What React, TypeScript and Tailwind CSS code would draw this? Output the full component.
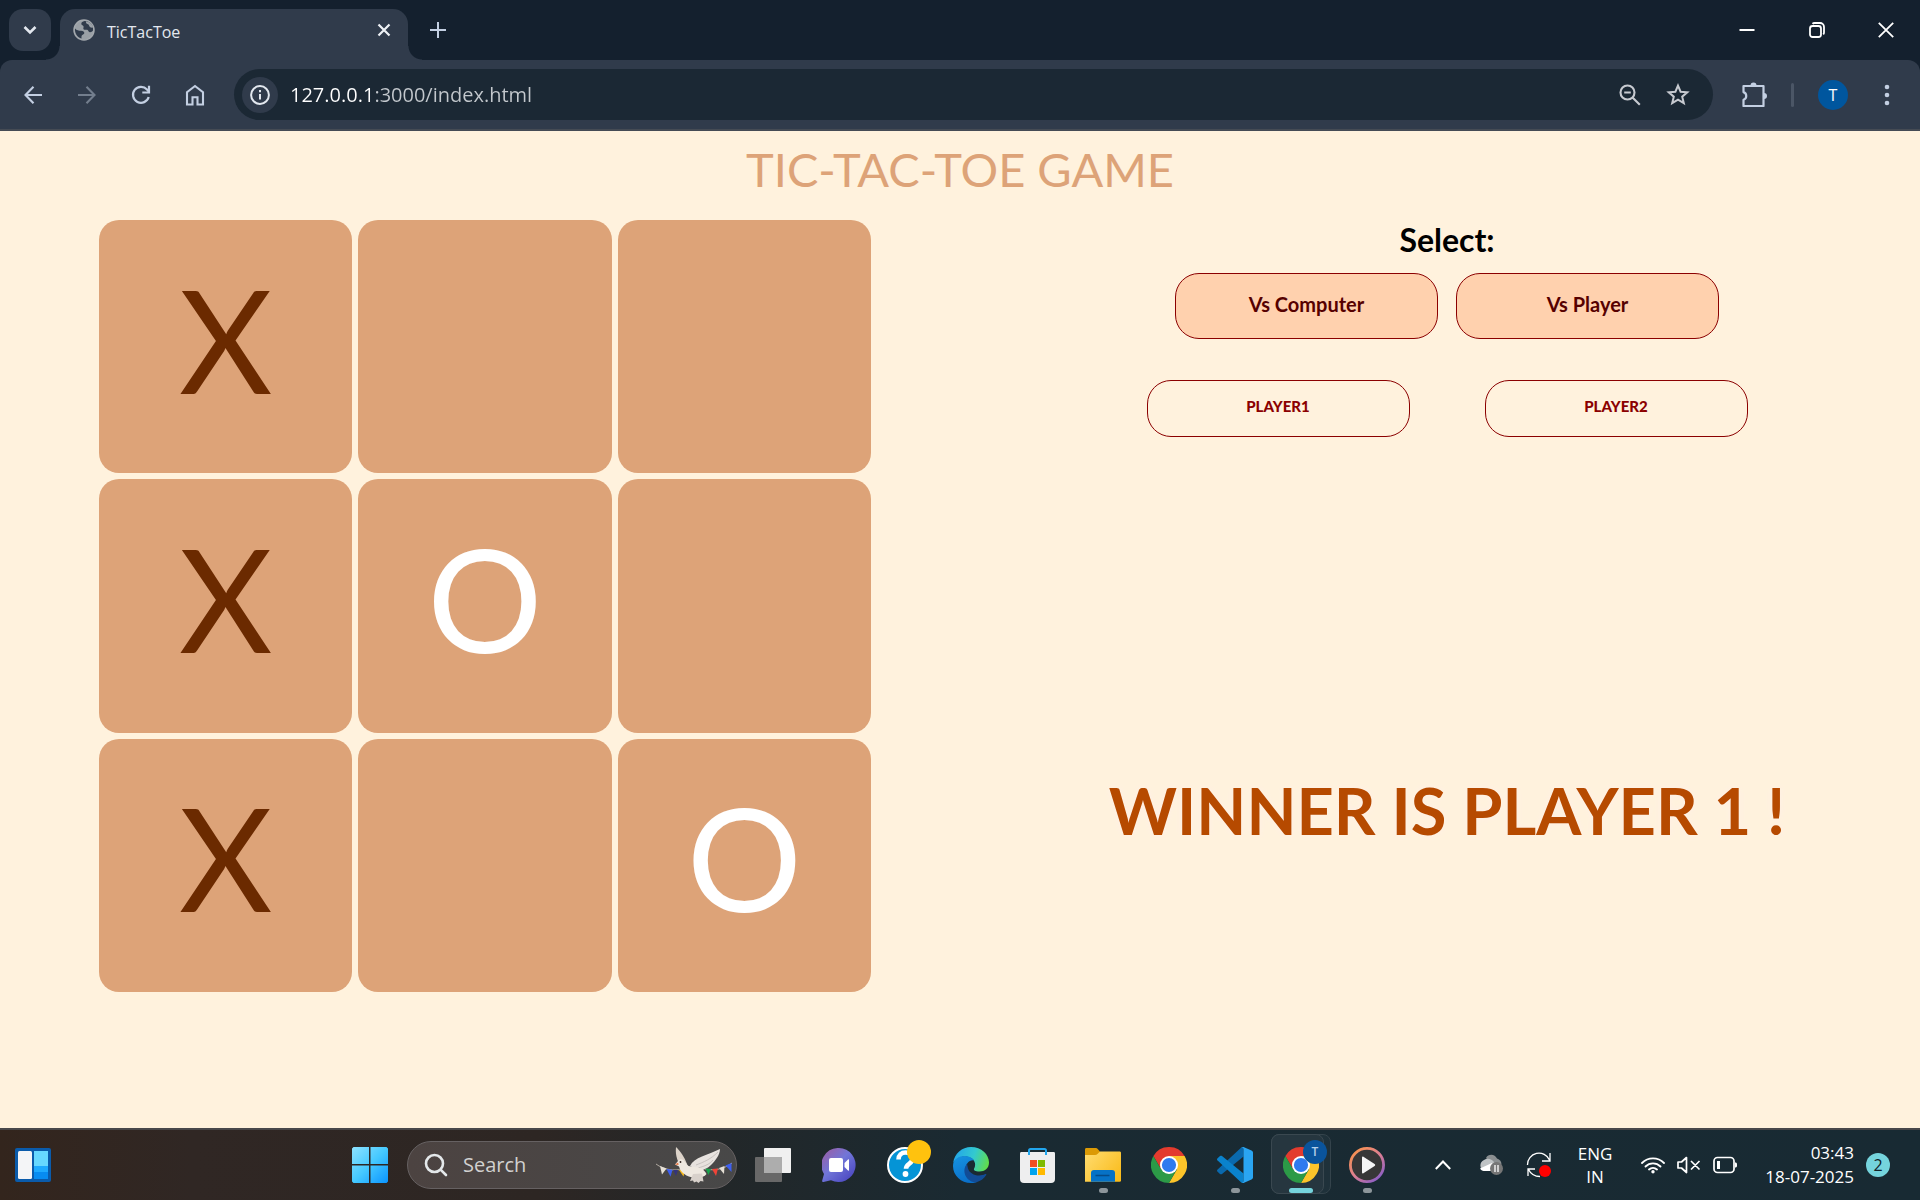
import React from "react";

type Mark = "X" | "O" | "";

const board: Mark[] = ["X", "", "", "X", "O", "", "X", "", "O"];

const iconButton = "flex h-9 items-center justify-center";

function GlobeIcon() {
  return (
    <svg width="22" height="22" viewBox="0 0 22 22" aria-hidden="true">
      <circle cx="11" cy="11" r="10" fill="#9aa0a6" stroke="#a3a8ad" strokeWidth="1.5" />
      <path
        d="M2 9.5c1.8 2 3.6 2.2 6 2.2 2.3 0 3.4.9 3.3 2.4 0 1.300-1.500 1.500-2.300 2.100-.6.5-.5 1.500-.5 3.200C4.500 18.500 1.500 14.500 2 9.500z"
        fill="#303b4b"
      />
      <path
        d="M11.500 2c-1.700.6-3.300 1.200-3.200 2.900.1 1.500 2 1.100 2.300 2.500.2 1.200-.9 2.100.2 3.100 1.100.9 2.200-.2 3.400.3 1.300.6 1 2.200 2.600 2.500 1.300.2 2.300-.6 3.200-1.700C20.700 6 17 2.200 11.500 2z"
        fill="#303b4b"
      />
      <path d="M13 2.200c-.3 1.700.4 2.500 2 3 1.400.5 1 2.200 2.200 3 .9.600 2.200.5 3.200.3C19.300 4.900 16.500 2.700 13 2.200z" fill="#9aa0a6" />
    </svg>
  );
}

function TabStrip() {
  return (
    <div className="flex h-[60px] items-end pl-[9px]">
      <button aria-label="Search tabs" className="mb-[9px] flex size-[42px] items-center justify-center rounded-[14px] bg-[#303b4b]">
        <svg width="14" height="10" viewBox="0 0 14 10" fill="none" stroke="#e3e8ef" strokeWidth="2.600" aria-hidden="true">
          <path d="M1.500 2l5.500 5.500L12.500 2" />
        </svg>
      </button>
      <div className="relative ml-[9px] flex h-[51px] w-[348px] items-center rounded-t-[15px] bg-[#303b4b] pr-3 pb-[9px] pl-[13px] before:absolute before:bottom-0 before:-left-[14px] before:size-[14px] before:bg-[radial-gradient(circle_at_0_0,transparent_13px,#303b4b_14px)] after:absolute after:-right-[14px] after:bottom-0 after:size-[14px] after:bg-[radial-gradient(circle_at_100%_0,transparent_13px,#303b4b_14px)]">
        <GlobeIcon />
        <span className="ml-3 pt-1 text-base leading-5 text-[#e3e8ef]">TicTacToe</span>
        <button aria-label="Close tab" className="ml-auto flex size-6 items-center justify-center">
          <svg width="14" height="14" viewBox="0 0 14 14" fill="none" stroke="#eef1f5" strokeWidth="2.200" aria-hidden="true">
            <path d="M1.500 1.500l11 11M12.500 1.500l-11 11" />
          </svg>
        </button>
      </div>
      <button aria-label="New tab" className="mb-[18px] ml-[18px] flex size-6 items-center justify-center">
        <svg width="16" height="16" viewBox="0 0 16 16" fill="none" stroke="#c3cfe2" strokeWidth="2" aria-hidden="true">
          <path d="M8 0v16M0 8h16" />
        </svg>
      </button>
      <div className="mb-3 ml-auto flex">
        <button aria-label="Minimize" className={`${iconButton} w-[70px]`}>
          <svg width="16" height="16" viewBox="0 0 16 16" stroke="#fff" strokeWidth="2" aria-hidden="true">
            <path d="M.5 8h15" />
          </svg>
        </button>
        <button aria-label="Restore" className={`${iconButton} w-[69px]`}>
          <svg width="16" height="16" viewBox="0 0 16 16" fill="none" stroke="#fff" strokeWidth="1.800" aria-hidden="true">
            <rect x="1" y="4" width="11" height="11" rx="2.500" />
            <path d="M3.500 1.800C4 1.200 4.800 1 5.600 1H11a4 4 0 0 1 4 4v5.400c0 .8-.3 1.500-.8 2" />
          </svg>
        </button>
        <button aria-label="Close window" className={`${iconButton} w-[69px]`}>
          <svg width="16" height="16" viewBox="0 0 16 16" stroke="#fff" strokeWidth="1.800" aria-hidden="true">
            <path d="M.8.800l14.400 14.400M15.200.8L.8 15.200" />
          </svg>
        </button>
      </div>
    </div>
  );
}

function Toolbar() {
  return (
    <div className="flex h-[71px] items-center rounded-t-[12px] border-b-2 border-[#454b54] bg-[#303b4b] pl-[6px] text-[#c3cfe2]">
      <button aria-label="Back" className={`${iconButton} w-[54px]`}>
        <svg width="18" height="18" viewBox="0 0 18 18" fill="none" stroke="currentColor" strokeWidth="2.100" aria-hidden="true">
          <path d="M18 9H1.500M9.500.8L1.500 9l8 8.200" />
        </svg>
      </button>
      <button aria-label="Forward" className={`${iconButton} w-[54px] text-[#737e8d]`}>
        <svg width="18" height="18" viewBox="0 0 18 18" fill="none" stroke="currentColor" strokeWidth="2.100" aria-hidden="true">
          <path d="M0 9h16.500M8.500.8l8 8.200-8 8.200" />
        </svg>
      </button>
      <button aria-label="Reload" className={`${iconButton} w-[54px]`}>
        <svg width="20" height="20" viewBox="0 0 20 20" fill="none" stroke="currentColor" strokeWidth="2.200" aria-hidden="true">
          <path d="M17.700 12A8 8 0 1 1 16 4.500l1.800 2" />
          <path d="M18 .8v6.700h-6.700" />
        </svg>
      </button>
      <button aria-label="Home" className={`${iconButton} w-[54px]`}>
        <svg width="20" height="22" viewBox="0 0 20 22" fill="none" stroke="currentColor" strokeWidth="2.100" aria-hidden="true">
          <path d="M2 20.500V8.300L10 2l8 6.300v12.200h-5.500v-7.300h-5v7.300z" />
        </svg>
      </button>
      <div className="ml-3 flex h-[51px] min-w-0 flex-1 items-center rounded-full bg-[#1b2834] pr-[11px] pl-2">
        <button aria-label="View site information" className="flex size-9 shrink-0 items-center justify-center rounded-full bg-[#303b4b]">
          <svg width="20" height="20" viewBox="0 0 20 20" fill="none" stroke="#e3e8ef" strokeWidth="2" aria-hidden="true">
            <circle cx="10" cy="10" r="8.900" />
            <path d="M10 9v5.500M10 5v2.200" />
          </svg>
        </button>
        <input
          aria-label="Address"
          readOnly
          value="127.0.0.1:3000/index.html"
          className="ml-3 h-9 min-w-0 flex-1 bg-[linear-gradient(90deg,#ffffff_82px,#c3c8cd_82px)] bg-clip-text text-xl text-transparent outline-none"
        />
        <button aria-label="Zoom" className={`${iconButton} w-12 text-[#c7cad0]`}>
          <svg width="22" height="22" viewBox="0 0 22 22" fill="none" stroke="currentColor" strokeWidth="2.100" aria-hidden="true">
            <circle cx="8.500" cy="8.500" r="7" />
            <path d="M5.200 8.500h6.600M13.500 13.500l7.300 7.300" />
          </svg>
        </button>
        <button aria-label="Bookmark this tab" className={`${iconButton} w-12 text-[#c7cad0]`}>
          <svg width="24" height="23" viewBox="0 0 24 23" fill="none" stroke="currentColor" strokeWidth="2" aria-hidden="true">
            <path d="M12 2.600l2.600 6.100 6.700.6-5.100 4.400 1.600 6.500-5.800-3.500-5.800 3.500 1.600-6.500L2.700 9.300l6.700-.6z" />
          </svg>
        </button>
      </div>
      <button aria-label="Extensions" className={`${iconButton} ml-[18px] w-[46px]`}>
        <svg width="25" height="25" viewBox="0 0 25 25" fill="none" stroke="currentColor" strokeWidth="2.200" strokeLinejoin="round" aria-hidden="true">
          <path d="M1.500 4h20v20h-20v-6.300a4 4 0 0 0 0-7.600z" />
          <path d="M8.500 3.500a3 3 0 0 1 6 0zM22 11a3 3 0 0 1 0 6z" fill="currentColor" stroke="none" />
        </svg>
      </button>
      <span className="ml-[14px] h-6 w-[3px] rounded-full bg-[#4b5666]" />
      <button aria-label="Profile" className="ml-6 flex size-[30px] items-center justify-center rounded-full bg-[#00569e] text-base text-white">
        T
      </button>
      <button aria-label="Menu" className={`${iconButton} mr-[6px] ml-3 w-[54px]`}>
        <svg width="6" height="22" viewBox="0 0 6 22" fill="currentColor" aria-hidden="true">
          <circle cx="3" cy="3" r="2.300" />
          <circle cx="3" cy="11" r="2.300" />
          <circle cx="3" cy="19" r="2.300" />
        </svg>
      </button>
    </div>
  );
}

function Game() {
  const choice = "h-[66px] w-[263px] rounded-[24px] border border-[#8b0000] bg-[#ffd1ae] pb-1 text-xl font-bold text-[#560000]";
  const player = "h-[57px] w-[263px] rounded-[24px] border border-[#8b0000] pb-1 text-[15px] font-black text-[#8b0000]";
  return (
    <main className="flex-1 bg-[#fff2dd] pt-2 font-['Lato',sans-serif]">
      <h1 className="h-[81px] text-center text-[47px] leading-[60px] text-[#dda378]">TIC-TAC-TOE GAME</h1>
      <div className="flex items-start pl-[99px]">
        <div className="grid w-[772px] grid-cols-3 gap-[6px]">
          {board.map((mark, i) => (
            <button
              key={i}
              aria-label={`Cell ${i + 1} ${mark || "empty"}`}
              className={`aspect-square rounded-[20px] bg-[#dda378] pb-4 text-[144px] leading-none ${mark === "X" ? "text-[#6b2a00]" : "text-white"}`}
            >
              {mark}
            </button>
          ))}
        </div>
        <section className="flex flex-1 flex-col items-center pl-[103px]">
          <h2 className="text-[32px] leading-10 font-bold text-black">Select:</h2>
          <div className="mt-[13px] flex gap-[18px]">
            <button className={choice}>Vs Computer</button>
            <button className={choice}>Vs Player</button>
          </div>
          <div className="mt-[41px] flex gap-[75px]">
            <button className={player}>PLAYER1</button>
            <button className={player}>PLAYER2</button>
          </div>
          <p className="mt-[333px] text-[65px] leading-[80px] font-bold text-[#b64a00] [text-shadow:0_0_6px_#ffefe8]">WINNER IS PLAYER 1 !</p>
        </section>
      </div>
    </main>
  );
}

function ChromeIcon() {
  return (
    <svg width="36" height="36" viewBox="-18 -18 36 36" aria-hidden="true">
      <path d="M-15.590-9A18 18 0 0 1 15.590-9L0-9L-7.790 4.500z" fill="#e33b2e" />
      <path d="M15.590-9A18 18 0 0 1 0 18L7.790 4.500L0-9z" fill="#fcc42a" />
      <path d="M-15.590-9A18 18 0 0 0 0 18L7.790 4.500L-7.790 4.500z" fill="#2c9a47" />
      <circle r="9" fill="#fff" />
      <circle r="7.100" fill="#2f7aef" />
    </svg>
  );
}

function Dove() {
  return (
    <svg width="78" height="38" viewBox="0 0 78 38" aria-hidden="true">
      <path d="M1 18c8 6 18 7 27 5M50 23c10 2 19 0 27-6" fill="none" stroke="#c9c2b8" strokeWidth=".8" />
      <path d="M5 20l6.500 2.500-4.500 6z" fill="#e6e0d6" />
      <path d="M11.500 23l6 .8-2 7z" fill="#3d5ff0" />
      <path d="M18 24l5 0-2 6z" fill="#34347c" />
      <path d="M24 24l6-.5-1.500 7z" fill="#f6b81c" />
      <path d="M21 1c4 4 8 9 11 17l-5 4c-4-5-7-12-6-21z" fill="#dcd3c9" />
      <path d="M35 20C39 11 53 9 65 3c0 6-5 12-9 16-4 4-9 6-13 5z" fill="#e7e2de" />
      <path d="M41 19c8-3 15-6 22-13M43 22c7-2 12-4 15-8" stroke="#b9b3b0" strokeWidth=".7" fill="none" />
      <path d="M20 18.500l3-3.500c2-2.500 5-2 6.500.5l4 4.500 6 1c6 0 10 3 12 7-2 3-7 4-12 3.500-8-.5-14-5-15.500-11z" fill="#eee8e0" />
      <path d="M20 18.500l3.200-2 .3 2.500z" fill="#e8703a" />
      <circle cx="25.500" cy="16" r=".9" fill="#30231f" />
      <path d="M38 28l-3 7 3-.5 1 2 2.500-1 2 1.500 2-2 3 .5-1.500-8z" fill="#d8d1cb" />
      <path d="M50.500 22.500l5.500.5-2.500 6z" fill="#16a34a" />
      <path d="M57 23l6-.5-2 7.500z" fill="#f04438" />
      <path d="M64 22l5.500-2-.5 8z" fill="#e6e0d6" />
      <path d="M70.500 19.500l6-2.500v9z" fill="#3d5ff0" />
    </svg>
  );
}

function TaskButton({ label, running, children }: { label: string; running?: boolean; children: React.ReactNode }) {
  return (
    <button aria-label={label} className="relative flex h-full w-[66px] items-center justify-center">
      {children}
      {running && <span className="absolute bottom-[7px] h-[5px] w-[9px] rounded-full bg-[#8d969b]" />}
    </button>
  );
}

function Taskbar() {
  return (
    <footer className="flex h-[72px] items-center border-t-2 border-[#48484a] bg-[linear-gradient(90deg,#33251d_0%,#302724_10%,#2d2623_28%,#222729_38%,#1a2a32_50%,#182a33_100%)] font-['Open_Sans','Noto_Sans',sans-serif]">
      <button aria-label="Widgets" className="flex h-full w-[66px] items-center justify-center">
        <svg width="36" height="34" viewBox="0 0 36 34" aria-hidden="true">
          <rect width="36" height="34" rx="2" fill="#0a5bab" />
          <rect x="3" y="3" width="14" height="28" rx="1.500" fill="#f4f5f7" />
          <path d="M19 3h14v15H19z" fill="#67d8ff" />
          <path d="M19 18h14v6H19z" fill="#1eaaff" />
          <path d="M19 24h14v7H19z" fill="#078cf2" />
        </svg>
      </button>
      <div className="ml-auto flex h-full items-center">
        <TaskButton label="Start">
          <svg width="36" height="36" viewBox="0 0 36 36" aria-hidden="true">
            <defs>
              <linearGradient id="win" x1="0" y1="0" x2="36" y2="36" gradientUnits="userSpaceOnUse">
                <stop stopColor="#8ee2ff" />
                <stop offset=".5" stopColor="#45c9ff" />
                <stop offset="1" stopColor="#0a94ff" />
              </linearGradient>
            </defs>
            <path d="M1.500 0H17v17H0V1.500zM18.500 0h16L36 1.500V17H18.500zM0 18.500h17V36H1.500L0 34.500zM18.500 18.500H36v16L34.500 36h-16z" fill="url(#win)" />
          </svg>
        </TaskButton>
        <label className="mr-[3px] ml-1 flex h-12 w-[330px] items-center rounded-full border border-[#666162] bg-[linear-gradient(90deg,#4c4341,#484848)] pr-[3px] pl-4">
          <svg width="24" height="24" viewBox="0 0 24 24" fill="none" stroke="#e4e8ea" strokeWidth="2.600" strokeLinecap="round" aria-hidden="true">
            <circle cx="10.500" cy="10.500" r="8.500" />
            <path d="M16.800 16.800l5.200 5.200" />
          </svg>
          <input aria-label="Search" placeholder="Search" className="ml-[15px] w-0 flex-1 text-xl text-white outline-none placeholder:text-[#d2d1d0]" />
          <Dove />
        </label>
        <TaskButton label="Task view">
          <svg width="36" height="34" viewBox="0 0 36 34" aria-hidden="true">
            <rect x="9" width="27" height="25" rx="1" fill="#f0f0f0" />
            <rect y="9" width="27" height="25" rx="1" fill="#686868" />
            <path d="M9 9h18v16H9z" fill="#adadad" />
          </svg>
        </TaskButton>
        <TaskButton label="Chat">
          <svg width="34" height="34" viewBox="0 0 34 34" aria-hidden="true">
            <defs>
              <linearGradient id="chat" x1="4" y1="4" x2="28" y2="30" gradientUnits="userSpaceOnUse">
                <stop stopColor="#9262ae" />
                <stop offset=".45" stopColor="#7176d8" />
                <stop offset="1" stopColor="#4f4cc4" />
              </linearGradient>
            </defs>
            <path d="M17 0a17 17 0 1 1-8 32.200L1.500 34c-1 .2-1.600-.6-1.300-1.500L2 26A17 17 0 0 1 17 0z" fill="url(#chat)" />
            <rect x="7" y="10" width="14" height="14" rx="2" fill="#fff" />
            <path d="M22.500 15l3.500-3.500c.6-.5 1-.3 1 .4v10.200c0 .7-.4.9-1 .4L22.500 19z" fill="#fff" />
          </svg>
        </TaskButton>
        <TaskButton label="Get help">
          <svg width="44" height="44" viewBox="0 0 44 44" className="-mt-2 ml-2" aria-hidden="true">
            <circle cx="18" cy="26" r="17" fill="#0594d6" stroke="#fff" strokeWidth="2" />
            <path d="M11.500 20.500c0-4.500 3-7 7-7s7 2.500 7 6.300c0 5-6.500 5-6.500 10" fill="none" stroke="#fff" strokeWidth="4.600" />
            <circle cx="18.500" cy="35" r="2.900" fill="#fff" />
            <circle cx="32" cy="13" r="12" fill="#ffc20e" />
          </svg>
        </TaskButton>
        <TaskButton label="Edge">
          <svg width="36" height="36" viewBox="0 0 36 36" aria-hidden="true">
            <defs>
              <linearGradient id="edgeTop" x1="2" y1="8" x2="36" y2="20" gradientUnits="userSpaceOnUse">
                <stop stopColor="#24a8e8" />
                <stop offset=".5" stopColor="#33c9cf" />
                <stop offset="1" stopColor="#66e03c" />
              </linearGradient>
              <linearGradient id="edgeLeft" x1="4" y1="10" x2="14" y2="36" gradientUnits="userSpaceOnUse">
                <stop stopColor="#1590df" />
                <stop offset="1" stopColor="#0a6fc9" />
              </linearGradient>
            </defs>
            <path d="M.2 16C1.300 6.500 9 0 18 0c10.500 0 18 7.500 18 15.500 0 6-4.500 9-9.500 9-4.500 0-6-1.500-5.500-2.800 2-3 1.500-8-2.500-10.500C12 7.500 3.500 10 .2 16z" fill="url(#edgeTop)" />
            <path d="M0 19C0 12 6 9 11.500 9c4.500 0 8 2 9.800 4.500-5-1-10 4-8.300 11C14.500 31.500 20 35 25 34.500 22.500 35.600 20.500 36 18 36 8 36 0 28.500 0 19z" fill="url(#edgeLeft)" />
            <path d="M14 16.500C8 24 13 34.500 22.500 35.400 27.500 34.500 31 31.500 33.200 28c.4-.8-.1-1.300-.9-.9-7 3.400-15.500.4-17.300-5.600-.5-1.800-.6-3.500-1-5z" fill="#124c96" />
          </svg>
        </TaskButton>
        <TaskButton label="Microsoft Store">
          <svg width="35" height="35" viewBox="0 0 35 35" aria-hidden="true">
            <path d="M0 5.500C0 4.500.5 4 1.500 4h32c1 0 1.500.5 1.500 1.500V31a4 4 0 0 1-4 4H4a4 4 0 0 1-4-4z" fill="#eeeeef" />
            <path d="M9 7V2.500C9 1.500 9.500 1 10.500 1h14c1 0 1.500.5 1.500 1.500V7" fill="none" stroke="#22a6ee" strokeWidth="2" />
            <path d="M10 12h7v7h-7z" fill="#f04e23" />
            <path d="M18 12h7v7h-7z" fill="#7fba00" />
            <path d="M10 20h7v7h-7z" fill="#00a4ef" />
            <path d="M18 20h7v7h-7z" fill="#ffb900" />
          </svg>
        </TaskButton>
        <TaskButton label="File Explorer" running>
          <svg width="36" height="34" viewBox="0 0 36 34" aria-hidden="true">
            <defs>
              <linearGradient id="folder" x1="0" y1="4" x2="36" y2="34" gradientUnits="userSpaceOnUse">
                <stop stopColor="#ffdc70" />
                <stop offset="1" stopColor="#f9b915" />
              </linearGradient>
            </defs>
            <path d="M0 1.500C0 .5.500 0 1.500 0h9c1 0 1.500.3 2.200 1L15 3.500V8H0z" fill="#dc9a05" />
            <path d="M0 7h10c1 0 2-.4 2.800-1.200L15 3.500h19.500c1 0 1.500.5 1.500 1.500v27.500c0 .8-.4 1.200-1.200 1.200H0z" fill="url(#folder)" />
            <path d="M6 33.700V25a3 3 0 0 1 3-3h18a3 3 0 0 1 3 3v8.700z" fill="#0672c6" />
            <path d="M10.500 27.500h14" stroke="#064b87" strokeWidth="1.500" />
          </svg>
        </TaskButton>
        <TaskButton label="Chrome">
          <ChromeIcon />
        </TaskButton>
        <TaskButton label="Visual Studio Code" running>
          <svg width="36" height="36" viewBox="0 0 36 36" aria-hidden="true">
            <path d="M26.500 9.500L5 27c-.6.500-1.400.4-2 0L.6 24.800c-.8-.7-.8-1.700 0-2.400L24 .7 26.500 0z" fill="#0a69ad" />
            <path d="M26.500 26.500L5 9c-.6-.5-1.400-.4-2 0L.6 11.200c-.8.700-.8 1.700 0 2.400L24 35.300l2.500.7z" fill="#0a82cc" />
            <path d="M26.500 36c-1 .2-2-.1-2.700-.8 1 .9 2.700.2 2.700-1.300V2.100C26.500.6 24.800-.1 23.800.8 24.500.1 25.500-.2 26.500 0l8 3.500c1 .5 1.500 1.300 1.500 2.300v24.400c0 1-.5 1.800-1.500 2.300z" fill="#2aa5f2" />
          </svg>
        </TaskButton>
        <button aria-label="Chrome, active window" className="relative flex h-full w-[66px] items-center justify-center">
          <span className="absolute top-[4px] left-[3px] h-[60px] w-[60px] rounded-lg border border-[#34434b] bg-[#1f313a]" />
          <span className="absolute top-[4px] left-[3px] h-[60px] w-[53px] rounded-lg border border-[#3a4850] bg-[#26363f]" />
          <span className="relative">
            <ChromeIcon />
            <span className="absolute -top-[7px] left-5 flex size-6 items-center justify-center rounded-full bg-[#0a549c] text-xs font-semibold text-[#b5d0ea]">T</span>
          </span>
          <span className="absolute bottom-[7px] h-[5px] w-6 rounded-full bg-[#75d4dd]" />
        </button>
        <TaskButton label="Media Player" running>
          <svg width="36" height="36" viewBox="0 0 36 36" aria-hidden="true">
            <defs>
              <linearGradient id="media" x1="6" y1="4" x2="30" y2="32" gradientUnits="userSpaceOnUse">
                <stop stopColor="#f79152" />
                <stop offset=".5" stopColor="#dd7f92" />
                <stop offset="1" stopColor="#8c5fc4" />
              </linearGradient>
            </defs>
            <circle cx="18" cy="18" r="16.600" fill="#373737" stroke="url(#media)" strokeWidth="2.800" />
            <path d="M13 10.500c0-.9.700-1.200 1.400-.8l11.200 7.300c.8.500.8 1.500 0 2l-11.200 7.300c-.7.400-1.400.1-1.400-.8z" fill="#f5f5f5" />
          </svg>
        </TaskButton>
      </div>
      <div className="ml-[27px] flex h-full items-center pr-[30px] text-white">
        <button aria-label="Show hidden icons" className={`${iconButton} w-8`}>
          <svg width="16" height="10" viewBox="0 0 16 10" fill="none" stroke="currentColor" strokeWidth="2" aria-hidden="true">
            <path d="M.8 9L8 1.500 15.200 9" />
          </svg>
        </button>
        <button aria-label="OneDrive" className={`${iconButton} ml-4 w-8`}>
          <svg width="26" height="22" viewBox="0 0 26 22" aria-hidden="true">
            <path d="M8 4c2-4.500 9-4.500 11 .5 3 1 4.500 3 4.500 6H14z" fill="#8b8f91" />
            <path d="M6 17a6 6 0 0 1 0-11c4-2.500 8-.5 10 2l4 9z" fill="#bfc3c5" />
            <path d="M2 14.500L14 9l6 8H6c-2 0-3-1-4-2.500z" fill="#fff" />
            <circle cx="18.500" cy="14.500" r="6.500" fill="#767676" />
            <path d="M17 11v7M20 11v7" stroke="#fff" strokeWidth="1.300" />
          </svg>
        </button>
        <button aria-label="Sync" className={`${iconButton} ml-4 w-8`}>
          <svg width="26" height="26" viewBox="0 0 26 26" fill="none" stroke="currentColor" strokeWidth="1.300" aria-hidden="true">
            <path d="M1.500 13A11.500 11.500 0 0 1 23.500 8M24 1v8h-8M2 24v-7h7M2.500 17.500C5 22.500 9 24.500 14 24.500" />
            <circle cx="19" cy="19" r="6" fill="#ff0000" stroke="none" />
          </svg>
        </button>
        <button aria-label="Input language" className="ml-4 w-[48px] text-center text-[17px] leading-[23px]">
          ENG
          <br />
          IN
        </button>
        <button aria-label="Network, sound and battery" className="ml-[22px] flex items-center gap-3">
          <svg width="24" height="18" viewBox="0 0 24 18" fill="none" stroke="currentColor" strokeWidth="1.800" strokeLinecap="round" aria-hidden="true">
            <path d="M1 7a15.500 15.500 0 0 1 22 0M4.500 10.500a10.500 10.500 0 0 1 15 0M8 13.500a6 6 0 0 1 8 0" />
            <circle cx="12" cy="15.800" r="1.700" fill="currentColor" stroke="none" />
          </svg>
          <svg width="24" height="18" viewBox="0 0 24 18" fill="none" stroke="currentColor" strokeWidth="1.700" strokeLinejoin="round" aria-hidden="true">
            <path d="M1 6v6h3.500l5 4.500v-15L4.500 6zM14 5l8.500 8.500M22.500 5L14 13.500" />
          </svg>
          <svg width="25" height="18" viewBox="0 0 25 18" fill="none" stroke="currentColor" strokeWidth="1.700" aria-hidden="true">
            <rect x="1" y="1.500" width="20" height="15" rx="3.500" />
            <path d="M4 5h3v8H4z" fill="currentColor" stroke="none" />
            <path d="M22 6.500c1.500 0 2 .5 2 2v1c0 1.500-.5 2-2 2z" fill="currentColor" stroke="none" />
          </svg>
        </button>
        <button aria-label="Clock" className="ml-3 w-[104px] text-right text-[17px] leading-6">
          03:43
          <br />
          18-07-2025
        </button>
        <button aria-label="2 notifications" className="ml-3 flex size-6 items-center justify-center rounded-full bg-[#75d4dd] text-base text-[#102228]">
          2
        </button>
      </div>
    </footer>
  );
}

export default function App() {
  return (
    <div className="flex min-h-screen flex-col bg-[#14202e] font-['Open_Sans','Noto_Sans',sans-serif]">
      <header>
        <TabStrip />
        <Toolbar />
      </header>
      <Game />
      <Taskbar />
    </div>
  );
}
